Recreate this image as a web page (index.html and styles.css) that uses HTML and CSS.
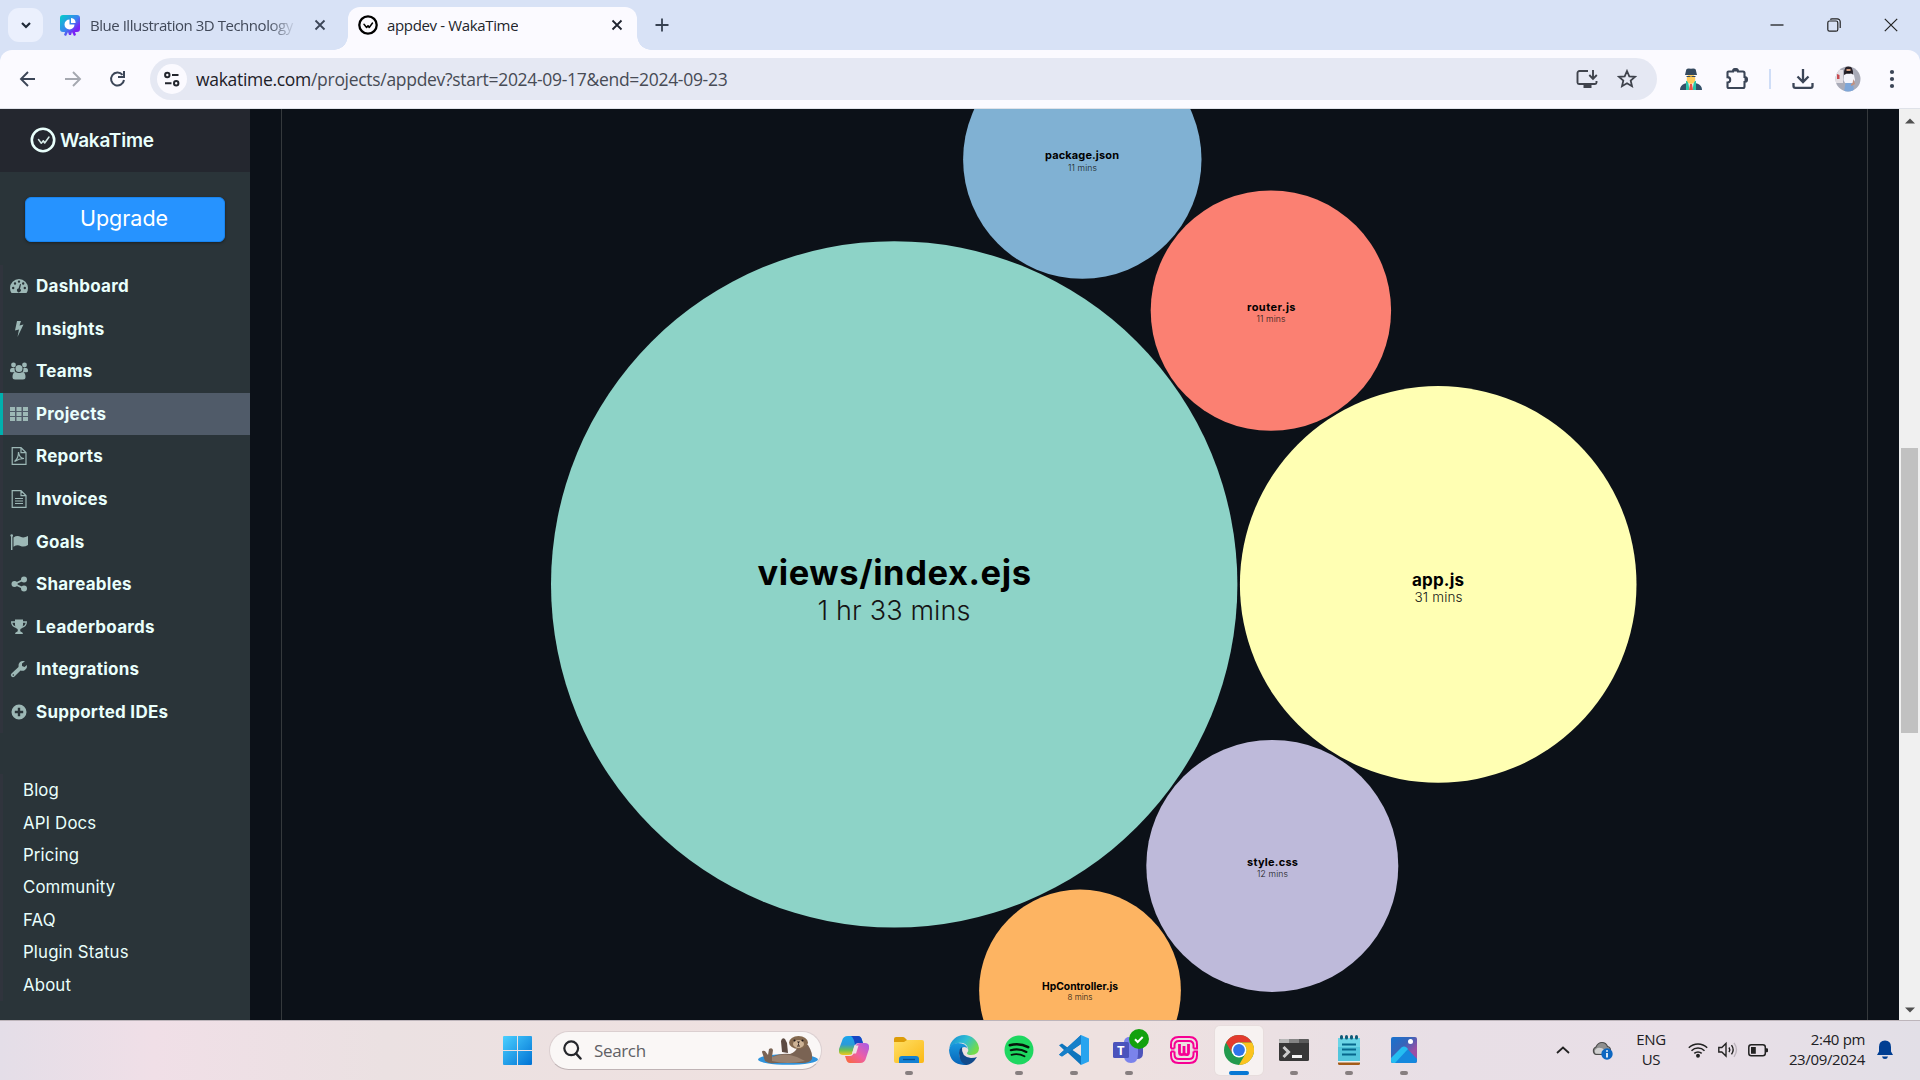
FILE: index.html
```html
<!DOCTYPE html>
<html lang="en">
<head>
<meta charset="utf-8">
<title>appdev - WakaTime</title>
<link rel="stylesheet" href="styles.css">
</head>
<body>
<div class="screen">
  <header class="tabstrip">
    <div class="tab-search"><svg width="12" height="12" viewBox="0 0 12 12"><path d="M2 4l4 4 4-4" fill="none" stroke="#1f2937" stroke-width="2.2"/></svg></div>
    <div class="tab tab-idle">
      <svg class="favicon" width="20" height="21" viewBox="0 0 20 21"><defs><linearGradient id="fv" x1="0" y1="0" x2="1" y2="1"><stop offset="0" stop-color="#00d0c8"/><stop offset=".5" stop-color="#3b82f0"/><stop offset=".75" stop-color="#7a22f5"/></linearGradient></defs><path d="M3 0h14a3 3 0 0 1 3 3v11a3 3 0 0 1-3 3h-2l1 3-2 1-2-4-1 3H9l-1-3-2 4-2-1 1-3H3a3 3 0 0 1-3-3V3a3 3 0 0 1 3-3z" fill="url(#fv)"/><path d="M9.500 4.500v5h5a5 5 0 1 1-5-5z" fill="#fff"/><path d="M11 3a5 5 0 0 1 4.600 5H11z" fill="#fff"/></svg>
      <span class="tab-title fade">Blue Illustration 3D Technology</span>
      <svg class="tab-close" width="12" height="12" viewBox="0 0 12 12"><path d="M1.500 1.500l9 9m0-9l-9 9" stroke="#3c4657" stroke-width="1.800"/></svg>
    </div>
    <div class="tab tab-active">
      <svg class="favicon" width="20" height="20" viewBox="0 0 20 20"><circle cx="10" cy="10" r="8.700" fill="none" stroke="#000" stroke-width="2.300"/><path d="M6 9.300l2.600 3.200 1.400-1.800 1.200 1.800L14.500 8" fill="none" stroke="#000" stroke-width="1.500" stroke-linejoin="round" stroke-linecap="round"/></svg>
      <span class="tab-title">appdev - WakaTime</span>
      <svg class="tab-close" width="12" height="12" viewBox="0 0 12 12"><path d="M1.500 1.500l9 9m0-9l-9 9" stroke="#1f2430" stroke-width="1.800"/></svg>
    </div>
    <svg class="new-tab" width="14" height="14" viewBox="0 0 14 14"><path d="M7 .5v13M.5 7h13" stroke="#374151" stroke-width="1.800"/></svg>
    <div class="window-controls">
      <svg width="14" height="14" viewBox="0 0 14 14"><path d="M.5 7h13" stroke="#111" stroke-width="1.200"/></svg>
      <svg width="14" height="14" viewBox="0 0 14 14" fill="none" stroke="#222" stroke-width="1.200"><rect x=".8" y="3" width="10" height="10.200" rx="1.800"/><path d="M3.300 1.500Q4 .8 5 .8h5.200a3 3 0 0 1 3 3V10"/></svg>
      <svg width="14" height="14" viewBox="0 0 14 14"><path d="M.8.800l12.400 12.400m0-12.400L.8 13.200" stroke="#222" stroke-width="1.200"/></svg>
    </div>
  </header>

  <div class="toolbar">
    <div class="nav-buttons">
      <svg width="18" height="18" viewBox="0 0 18 18" fill="none" stroke="#3b4557" stroke-width="1.900"><path d="M16 9H2.500M9 2L2 9l7 7"/></svg>
      <svg width="18" height="18" viewBox="0 0 18 18" fill="none" stroke="#a5a8b0" stroke-width="1.900"><path d="M1 9h14.500M9 2l7 7-7 7"/></svg>
      <svg width="18" height="18" viewBox="0 0 18 18" fill="none" stroke="#3b4557" stroke-width="2"><path d="M15 10A6.500 6.500 0 1 1 13.500 4.800"/><path d="M15 1v6H9"/></svg>
    </div>
    <div class="omnibox">
      <span class="site-info"><svg width="17" height="16" viewBox="0 0 17 16" fill="none" stroke="#23262e" stroke-width="2"><circle cx="3.300" cy="4" r="2.200"/><path d="M8 4h6.500M1 12.300h6.500"/><circle cx="12.200" cy="12.300" r="2.200"/></svg></span>
      <span class="url"><b>wakatime.com</b>/projects/appdev?start=2024-09-17&amp;end=2024-09-23</span>
      <svg width="22" height="20" viewBox="0 0 22 20" fill="none" stroke="#3f434c" stroke-width="1.900"><path d="M12 2H3.500A2 2 0 0 0 1.500 4v9.500A1.500 1.500 0 0 0 3 15h16a1.500 1.500 0 0 0 1.500-1.500V12"/><path d="M17 1v8M13.300 6l3.700 3.800L20.800 6"/><path d="M7.500 17.500h8" stroke-width="3"/></svg>
      <svg class="star" width="20" height="20" viewBox="0 0 20 20"><path d="M10 2l2.300 5.300 5.700.5-4.300 3.800 1.300 5.600-5-3-5 3 1.300-5.600L2 7.800l5.700-.5z" fill="none" stroke="#3f434c" stroke-width="1.800"/></svg>
    </div>
    <div class="extensions">
      <svg width="22" height="22" viewBox="0 0 22 22"><path d="M0 22q0-5 5-6.500l6-1.500 6 1.500q5 1.500 5 6.500z" fill="#33506a"/><path d="M6 13l5-1 5 1v9H6z" fill="#29c5a7"/><path d="M8 13h6l-1.500 9h-3z" fill="#f4f4ee"/><path d="M10 16h2l1 6H9z" fill="#ee5045"/><ellipse cx="11" cy="11" rx="4.300" ry="5" fill="#ffcc5c"/><path d="M5 7l1.300-5.500q1-1.500 4.700-.7 3.700-.8 4.700.7L17 7z" fill="#34495e"/><path d="M6.500 8h9v1h-3l-1.500-.8-1.500.8h-3z" fill="#34495e"/></svg>
      <svg width="22" height="22" viewBox="0 0 22 22"><path d="M2.500 3.500H7a2.500 2.500 0 0 1 5 0h5A1.500 1.500 0 0 1 18.500 5v4a2.500 2.500 0 0 1 0 5v4.500A1.500 1.500 0 0 1 17 20H2.500A1 1 0 0 1 1.500 19v-4.500a2.700 2.700 0 0 0 0-5.400V4.500a1 1 0 0 1 1-1z" fill="none" stroke="#3b4557" stroke-width="2.100"/><path d="M7 3.500a2.500 2.500 0 0 1 5 0M18.500 9a2.500 2.500 0 0 1 0 5" fill="#3b4557"/></svg>
      <i class="divider"></i>
      <svg width="22" height="22" viewBox="0 0 22 22" fill="none" stroke="#3b4557" stroke-width="2.300"><path d="M11 1v12M5.500 8.500L11 14l5.500-5.500M1.500 15v3a1.800 1.800 0 0 0 1.800 1.800h15.400a1.800 1.800 0 0 0 1.800-1.800v-3"/></svg>
      <svg class="avatar" width="26" height="26" viewBox="0 0 26 26"><defs><clipPath id="av"><circle cx="13" cy="13" r="12.500"/></clipPath></defs><g clip-path="url(#av)"><path d="M0 0h26v26H0z" fill="#a9abb8"/><path d="M0 4h8v13H0z" fill="#e3dfe5"/><path d="M2 8l2.500 1v4H2z" fill="#c84a50"/><path d="M9 8q0-8 4.500-8T18 8v4H9z" fill="#28222a"/><path d="M11.500 3h4v2h-4z" fill="#d6a083"/><path d="M9 9l3-1.500h4L19 9l1 5-2 3h-8l-1.500-3z" fill="#f4f4fb"/><path d="M10.500 17h7.500l1 9H9z" fill="#7ea6d8"/><path d="M18.500 13l1.500 5-3.500 2-.7-1.500 1.700-1.500z" fill="#c29180"/><path d="M11.500 5h4v2.500h-4z" fill="#18161c"/></g></svg>
      <svg width="6" height="20" viewBox="0 0 6 20" fill="#3b4557"><circle cx="3" cy="3" r="2.100"/><circle cx="3" cy="10" r="2.100"/><circle cx="3" cy="17" r="2.100"/></svg>
    </div>
  </div>

  <div class="page">
    <aside class="sidebar">
      <div class="brand">
        <svg width="26" height="26" viewBox="0 0 26 26"><circle cx="13" cy="13" r="11.200" fill="none" stroke="#e9fffc" stroke-width="2.600"/><path d="M8.500 12.500l2.800 3.700 2-2.500 1.400 2.300 4.300-6" fill="none" stroke="#d5e9e7" stroke-width="1.500" stroke-linejoin="round" stroke-linecap="round"/></svg>
        <span>WakaTime</span>
      </div>
      <a class="upgrade">Upgrade</a>
      <nav class="menu">
        <a><svg viewBox="0 0 18 18"><path fill-rule="evenodd" d="M0 11a9 9 0 0 1 18 0q0 3-1.500 5h-15Q0 14 0 11zm2 0a1.200 1.200 0 1 0 2.400 0A1.200 1.200 0 0 0 2 11zm1.800-4.500a1.200 1.200 0 1 0 2.400 0 1.200 1.200 0 0 0-2.400 0zM7.800 4.600a1.200 1.200 0 1 0 2.400 0 1.200 1.200 0 0 0-2.400 0zM12 6.500a1.200 1.200 0 1 0 2.400 0 1.200 1.200 0 0 0-2.400 0zM13.600 11a1.200 1.200 0 1 0 2.400 0 1.200 1.200 0 0 0-2.400 0zM10 7L8.500 11.500a1.900 1.900 0 1 0 1.500.3L11 7.300z"/></svg><span>Dashboard</span></a>
        <a><svg viewBox="0 0 18 18"><path d="M7 1h4L9.500 5.500l4-1L7.500 17 9 9.500l-4 1z"/></svg><span>Insights</span></a>
        <a><svg viewBox="0 0 18 18"><circle cx="3.500" cy="3" r="2.400"/><circle cx="14.500" cy="3" r="2.400"/><circle cx="9" cy="6.500" r="3.500"/><path d="M0 9q0-3 2-3h2.500q0 3 1.200 4.200H1.500Q0 10.200 0 9zM18 9q0-3-2-3h-2.500q0 3-1.200 4.200h4.200Q18 10.200 18 9zM2.500 15q0-4.500 3-5 3.500 2.200 7 0 3 .5 3 5 0 2.500-2.500 2.500H5Q2.500 17.500 2.500 15z"/></svg><span>Teams</span></a>
        <a class="current"><svg viewBox="0 0 18 18"><path d="M0 2h5v4H0zM6.500 2h5v4h-5zM13 2h5v4h-5zM0 7h5v4H0zM6.500 7h5v4h-5zM13 7h5v4h-5zM0 12h5v4H0zM6.500 12h5v4h-5zM13 12h5v4h-5z"/></svg><span>Projects</span></a>
        <a><svg viewBox="0 0 18 18" class="line"><path d="M2.200.7h8.800l5 4.800v11.800H2.200zM11 .7v5h5"/><path d="M4.500 14.500q4-3 4-9.500.5 6 5.500 6.500-5 0-9.500 3"/></svg><span>Reports</span></a>
        <a><svg viewBox="0 0 18 18" class="line"><path d="M2.200.7h8.800l5 4.800v11.800H2.200zM11 .7v5h5M5 8.500h8M5 11h8M5 13.500h8"/></svg><span>Invoices</span></a>
        <a><svg viewBox="0 0 18 18"><path d="M1 2h1.400v15H1z"/><circle cx="1.700" cy="2.500" r="1.300"/><path d="M3.500 4.500q3.500-2.500 7-.8Q13.500 5.500 18 3v9q-4 2.500-7.500 1-3-1.800-7 .7z"/></svg><span>Goals</span></a>
        <a><svg viewBox="0 0 18 18"><circle cx="4.500" cy="9" r="3"/><circle cx="14" cy="4.500" r="3"/><circle cx="14" cy="13.500" r="3"/><path d="M14 4.500L4.500 9l9.500 4.500" fill="none" stroke="#9db8b6" stroke-width="1.800"/></svg><span>Shareables</span></a>
        <a><svg viewBox="0 0 18 18"><path d="M5 1.500h8V7q0 3-2.500 4-.7 1 0 2.500Q13 14 13 16H5q0-2 2.500-2.500.7-1.500 0-2.500Q5 10 5 7z"/><path d="M5 4H1.700q0 4.500 5 5.300M13 4h3.300q0 4.500-5 5.300" fill="none" stroke="#9db8b6" stroke-width="1.300"/></svg><span>Leaderboards</span></a>
        <a><svg viewBox="0 0 18 18"><path fill-rule="evenodd" d="M1.500 13.500L8.500 7q-.7-3 1.500-5 2-1.500 5-.7L12 3.500V6l2.500 1L17 5q.5 3-2 5-2 1.300-4.500.6L4.500 16.500a2 2 0 0 1-3-3zM2.500 15a.8.800 0 1 0 1.600 0 .8.800 0 0 0-1.600 0z"/></svg><span>Integrations</span></a>
        <a><svg viewBox="0 0 18 18"><path fill-rule="evenodd" d="M9 1.500a7.500 7.500 0 1 1 0 15 7.500 7.500 0 0 1 0-15zM7.800 4.800v3H4.800v2.400h3v3h2.400v-3h3V7.800h-3v-3z"/></svg><span>Supported IDEs</span></a>
      </nav>
      <nav class="links">
        <a>Blog</a><a>API Docs</a><a>Pricing</a><a>Community</a><a>FAQ</a><a>Plugin Status</a><a>About</a>
      </nav>
    </aside>
    <main class="stage">
      <svg class="bubbles" width="1585" height="911" viewBox="282 109 1585 911">
        <circle cx="894.200" cy="584.400" r="343.200" fill="#8dd3c7"/>
        <circle cx="1438.200" cy="584.400" r="198.300" fill="#ffffb3"/>
        <circle cx="1272.300" cy="865.900" r="126" fill="#bebada"/>
        <circle cx="1270.900" cy="310.600" r="120.200" fill="#fb8072"/>
        <circle cx="1082.300" cy="159.500" r="119.200" fill="#80b1d3"/>
        <circle cx="1080" cy="990.500" r="100.900" fill="#fdb462"/>
        <g class="name">
          <text x="757.500" y="584.500" font-size="34.500" textLength="273.500">views/index.ejs</text>
          <text x="1412" y="585.500" font-size="17" textLength="52">app.js</text>
          <text x="1247" y="866" font-size="11" textLength="51">style.css</text>
          <text x="1247" y="311" font-size="11" textLength="48.500">router.js</text>
          <text x="1045" y="159" font-size="11" textLength="74">package.json</text>
          <text x="1042" y="990" font-size="10.300" textLength="76">HpController.js</text>
        </g>
        <g class="time">
          <text x="817.500" y="620" font-size="27" textLength="153">1 hr 33 mins</text>
          <text x="1414.500" y="602" font-size="13.500" textLength="48">31 mins</text>
          <text x="1257" y="877" font-size="8.600" textLength="31">12 mins</text>
          <text x="1256.500" y="322" font-size="8.600" textLength="29">11 mins</text>
          <text x="1068" y="171.300" font-size="8.600" textLength="29">11 mins</text>
          <text x="1067.500" y="1000.300" font-size="8" textLength="25">8 mins</text>
        </g>
      </svg>
    </main>
    <div class="scrollbar">
      <svg width="10" height="6" viewBox="0 0 10 6"><path d="M0 5.500L5 .5l5 5z" fill="#505050"/></svg>
      <i class="thumb"></i>
      <svg width="10" height="6" viewBox="0 0 10 6"><path d="M0 .5l5 5 5-5z" fill="#505050"/></svg>
    </div>
  </div>

  <footer class="taskbar">
    <svg class="start" width="29" height="29" viewBox="0 0 29 29"><defs><linearGradient id="win" x1="0" y1="0" x2="1" y2="1"><stop offset="0" stop-color="#4bd0ff"/><stop offset="1" stop-color="#0072d4"/></linearGradient></defs><path d="M1 0h13v14H0V1q0-1 1-1zM15 0h13q1 0 1 1v13H15zM0 15h14v14H1q-1 0-1-1zM15 15h14v13q0 1-1 1H15z" fill="url(#win)"/></svg>
    <div class="search">
      <svg width="20" height="20" viewBox="0 0 20 20" fill="none" stroke="#25262b" stroke-width="2.200"><circle cx="8.200" cy="8.300" r="6.900"/><path d="M13 13.500l4.500 5" stroke-linecap="round" stroke-width="2.500"/></svg>
      <span>Search</span>
      <svg class="otter" width="61" height="30" viewBox="0 0 61 30"><ellipse cx="31" cy="24.500" rx="30" ry="5.300" fill="#2f93dc"/><path d="M8 26L5 17q0-2 3-1l3 4 1-6q3-2 4 1l-1 7q8-4 18-3 6-2 9-9h9q5 8 4 14-2 4-10 4H18q-6 1-10-2z" fill="#7a6353"/><path d="M15 22q13-5 25 0l8 4q-18 4-33 0z" fill="#9a8270"/><path d="M25 17l-1-11q1-4 4-2l2 4 1 10z" fill="#5c4a42"/><ellipse cx="41.500" cy="7.500" rx="9.500" ry="6.500" fill="#84694f"/><ellipse cx="41.500" cy="9" rx="5.500" ry="4" fill="#cdb396"/><path d="M40 6.500h3l-1.500 2z" fill="#2a2020"/><circle cx="37.500" cy="5.500" r="1" fill="#20191a"/><circle cx="45.500" cy="5.500" r="1" fill="#20191a"/><path d="M41.500 8.500v2m-1.500.5h3" stroke="#3a2c28"/></svg>
    </div>
    <div class="apps">
      <div class="app"><svg width="30" height="30" viewBox="0 0 30 30"><defs><linearGradient id="c1" x1="0" y1="0" x2="0" y2="1"><stop offset="0" stop-color="#1ba6ee"/><stop offset=".45" stop-color="#2b9ad8"/><stop offset=".75" stop-color="#6fc04f"/><stop offset="1" stop-color="#f2c71e"/></linearGradient><linearGradient id="c2" x1="1" y1="0" x2="0" y2="1"><stop offset="0" stop-color="#a45bea"/><stop offset=".5" stop-color="#ee5fa5"/><stop offset="1" stop-color="#fb6a30"/></linearGradient></defs><path d="M14 1h5q3 0 4 4l1 3h-5q-3 0-4 4l-2 7q-1 1-4 1H4q-5 0-4-6L3 6q1-5 6-5z" fill="url(#c1)"/><path d="M16 28h-5q-3 0-4-4l-1-3h5q3 0 4-4l2-7q1-2 4-2h5q5 0 4 6l-3 9q-1 5-6 5z" fill="url(#c2)"/><path d="M15 1h4q3 0 4 4l1 3h-5q-2 0-3 2-1-7-4-9z" fill="#1746c4"/><path d="M15.500 10.500h4l-2.500 8h-4z" fill="#efe2e2"/></svg></div>
      <div class="app run"><svg width="30" height="30" viewBox="0 0 30 30"><defs><linearGradient id="fo" x1="0" y1="0" x2="1" y2="1"><stop offset="0" stop-color="#ffdf65"/><stop offset="1" stop-color="#fbb814"/></linearGradient></defs><path d="M0 4q0-2 2-2h7q1 0 2 1l2 2v5H0z" fill="#dd9c08"/><path d="M0 7h10l3-2h15q2 0 2 2v19q0 2-2 2H2q-2 0-2-2z" fill="url(#fo)"/><path d="M5 28v-4q0-3 3-3h14q3 0 3 3v4z" fill="#1381d3"/><path d="M9 24.500h12" stroke="#084f92" stroke-width="1.300"/></svg></div>
      <div class="app"><svg width="30" height="30" viewBox="0 0 30 30"><defs><linearGradient id="e1" x1="0" y1="0" x2="1" y2=".5"><stop offset="0" stop-color="#1487d4"/><stop offset=".55" stop-color="#31bfd3"/><stop offset="1" stop-color="#73db4b"/></linearGradient><linearGradient id="e2" x1="0" y1="0" x2="0" y2="1"><stop offset="0" stop-color="#1999df"/><stop offset="1" stop-color="#0763b7"/></linearGradient></defs><path d="M.3 13A15 15 0 0 1 30 13q0 7-8 7-4 0-4-2 2-2 1-5Q17 7 9 8 3 9 .3 13z" fill="url(#e1)"/><path d="M0 15Q1 8 9 8q8 0 10 6-1-2-4-2-4 1-5 6 0 8 9 12Q1 31 0 15z" fill="url(#e2)"/><path d="M10 18q0-4 3-6-1 10 9 11 4 0 6-1-5 8-11 8-7-3-7-12z" fill="#114a8b"/></svg></div>
      <div class="app run"><svg width="30" height="30" viewBox="0 0 30 30"><circle cx="15" cy="15" r="14.500" fill="#1ed760"/><path d="M5.800 10.200q10-2.700 18.400 2" fill="none" stroke="#06140b" stroke-linecap="round" stroke-width="2.600"/><path d="M6.800 15.200q8.500-2.300 15.600 1.800" fill="none" stroke="#06140b" stroke-linecap="round" stroke-width="2.100"/><path d="M7.500 19.800q7-1.800 13 1.500" fill="none" stroke="#06140b" stroke-linecap="round" stroke-width="1.800"/></svg></div>
      <div class="app run"><svg width="30" height="30" viewBox="0 0 30 30"><path d="M22 0L8.500 12.500 3 8.500 0 10.200l5 4.800-5 4.800 3 1.700 5.500-4L22 30V21l-8.500-6L22 9z" fill="#0e75bd"/><path d="M0 19.800L22 0v9L3 21.500z" fill="#167fc9"/><path d="M22 0l8 3.500v23L22 30z" fill="#28a4ef"/></svg></div>
      <div class="app run"><svg class="teams" width="36" height="35" viewBox="0 0 36 35"><circle cx="16" cy="13" r="5" fill="#7b83eb"/><path d="M20 15h10v9q0 6-6 6h-4z" fill="#4f55bb"/><path d="M11 15h14v10q0 9-7 9t-7-8z" fill="#7b83eb"/><rect y="13" width="16" height="16" rx="1.500" fill="#4b53bc"/><text x="4" y="25.500" class="teams-letter">T</text><circle cx="26" cy="10" r="10" fill="#13a10e"/><path d="M22 10.300l2.700 2.700 5-5" fill="none" stroke="#fff" stroke-width="2"/></svg></div>
      <div class="app"><svg width="30" height="30" viewBox="0 0 30 30"><g fill="none" stroke="#f70094" stroke-width="2"><path d="M2 13.500V9.500Q2 2 9.500 2h11Q28 2 28 9.500v4h-3.500M2 16.500v4Q2 28 9.500 28h11q7.500 0 7.500-7.500v-4h-3.500M2 13.500h3.500M2 16.500h3.500" /><path d="M5.500 13.500v-3q0-4.500 4.500-4.500h10q4.500 0 4.500 4.500v3M5.500 16.500v3q0 4.500 4.500 4.500h10q4.500 0 4.500-4.500v-3"/><path d="M10.500 9v8.500q0 2.200 2.200 2.200T15 17.500V11v6.500q0 2.200 2.300 2.200t2.200-2.200V9" stroke-width="2.800"/></g></svg></div>
      <div class="app run active"><svg width="30" height="30" viewBox="0 0 30 30"><circle cx="15" cy="15" r="15" fill="#229a4d"/><path d="M2 7.500A15 15 0 0 1 28 7.500H15A7.500 7.500 0 0 0 8.500 18.700z" fill="#e33b2e"/><path d="M28 7.500A15 15 0 0 1 15 30l6.500-11.300A7.500 7.500 0 0 0 15 7.500z" fill="#fcc31e"/><circle cx="15" cy="15" r="7.500" fill="#fff"/><circle cx="15" cy="15" r="5.900" fill="#2f74ea"/></svg></div>
      <div class="app run"><svg width="30" height="30" viewBox="0 0 30 30"><rect y="4" width="30" height="22" rx="1.500" fill="#383838"/><path d="M0 8V5.500Q0 4 1.500 4H10v4z" fill="#b7b7b7"/><path d="M10 4h10v4H10z" fill="#858585"/><path d="M20 4h8.500Q30 4 30 5.500V8H20z" fill="#5b5b5b"/><path d="M4.500 12l5 5-5 5" fill="none" stroke="#ccc" stroke-width="3"/><path d="M13 20h10v3H13z" fill="#f4f4f4"/></svg></div>
      <div class="app run"><svg width="24" height="30" viewBox="0 0 24 30"><path d="M1 3h22v23H1z" fill="#52c5dc"/><path d="M1 3h22v9H1z" fill="#6bd5e7"/><path d="M1 27h22v1.500q0 1.500-1.500 1.500h-19Q1 30 1 28.500z" fill="#a35a17"/><path d="M1 26h22v1.500H1z" fill="#eee"/><path d="M5 9.500h14M5 14.500h14M5 19.500h14" stroke="#07678c" stroke-width="1.800"/><g fill="#105b78"><rect x="3" width="3" height="4.500" rx="1.500"/><rect x="8" width="3" height="4.500" rx="1.500"/><rect x="13" width="3" height="4.500" rx="1.500"/><rect x="18" width="3" height="4.500" rx="1.500"/></g></svg></div>
      <div class="app run"><svg width="26" height="26" viewBox="0 0 26 26"><defs><linearGradient id="ph" x1="0" y1="0" x2="1" y2="1"><stop offset="0" stop-color="#1673cf"/><stop offset=".4" stop-color="#3764b9"/><stop offset=".7" stop-color="#9b4fa5"/></linearGradient><clipPath id="pc"><rect width="26" height="26" rx="2"/></clipPath></defs><rect width="26" height="26" rx="2" fill="url(#ph)"/><g clip-path="url(#pc)"><path d="M0 22l10.500-11q2.500-2.500 5 0L28 24v4H0z" fill="#1588dd"/><path d="M0 21l10.500-10.500q2.500-2 5 0L17 12 4 26H0z" fill="#25bdf1"/></g><circle cx="19.500" cy="4.500" r="2.500" fill="#fff"/></svg></div>
    </div>
    <div class="tray">
      <svg class="chev" width="14" height="8" viewBox="0 0 14 8"><path d="M1 7l6-5.500L13 7" fill="none" stroke="#222" stroke-width="1.800"/></svg>
      <svg class="cloud" width="21" height="19" viewBox="0 0 21 19"><path d="M4 13.500a4 4 0 0 1 0-7.500Q6 1.500 10 1.500t5.500 4q3 .5 3 4v4z" fill="#8f8f8f" stroke="#4c4c4c" stroke-width="1.200"/><path d="M3.500 12.500q-2-4 2-5.500 4-1 7 2l-1 4z" fill="#d0d0d0"/><circle cx="15" cy="13" r="5.700" fill="#0d67c1"/><path d="M15 9.200v1.600M15 12v4.500" stroke="#fff" stroke-width="1.700"/></svg>
      <div class="lang"><span>ENG</span><span>US</span></div>
      <svg class="wifi" width="20" height="16" viewBox="0 0 20 16" fill="none" stroke="#222" stroke-width="1.500"><path d="M.8 5.800a13 13 0 0 1 18.400 0M3.500 8.700a9.200 9.200 0 0 1 13 0M6.300 11.400a5.300 5.300 0 0 1 7.400 0"/><circle cx="10" cy="13.800" r="1.200" fill="#222"/></svg>
      <svg class="vol" width="20" height="18" viewBox="0 0 20 18" fill="none" stroke="#222" stroke-width="1.400"><path d="M.8 6.500V11h3L8 15V2.500L3.800 6.500z"/><path d="M11 6.500q1.500 2.300 0 4.600M13.500 4.200q3.300 4.600 0 9.200"/><path d="M16 1.800q5 7 0 14" stroke="#bdb5bd"/></svg>
      <svg class="batt" width="21" height="13" viewBox="0 0 21 13"><rect x=".8" y=".8" width="16.500" height="11" rx="2.500" fill="none" stroke="#222" stroke-width="1.500"/><path d="M3 3h4.800v6.700H3zM18 4.300h1q1 0 1 1v2q0 1-1 1h-1z" fill="#222"/></svg>
      <div class="clock"><span>2:40 pm</span><span>23/09/2024</span></div>
      <svg class="bell" width="16" height="20" viewBox="0 0 16 20"><path d="M8 .5q6 0 6 6.500v4.500l2 3.500H0l2-3.500V7Q2 .5 8 .5zM5 16.500h6q-.5 2.500-3 2.500t-3-2.500z" fill="#003e92"/></svg>
    </div>
  </footer>
</div>
</body>
</html>
```
FILE: styles.css
```css
* { box-sizing: border-box; }
body { margin: 0; overflow: hidden; font-family: "Open Sans", "Noto Sans", sans-serif; }
svg { display: block; flex: none; }
.screen { width: 1920px; height: 1080px; display: flex; flex-direction: column; background: #d8e2f6; }

/* Browser tabs */
.tabstrip { height: 50px; flex: none; display: flex; align-items: center; padding-left: 8px; }
.tab-search { width: 35px; height: 34px; border-radius: 11px; background: #ebf0fd; display: grid; place-items: center; }
.tab { display: flex; align-items: center; font-size: 15px; }
.tab-idle { width: 305px; padding: 0 22px 0 17px; color: #414959; }
.tab-active { width: 289px; height: 43px; align-self: flex-end; padding: 0 14px 7px 10px; background: #fbfaff; border-radius: 12px 12px 0 0; color: #22252c; position: relative; }
.tab-active::before, .tab-active::after { content: ""; position: absolute; bottom: 0; width: 14px; height: 14px; }
.tab-active::before { left: -14px; background: radial-gradient(circle at 0 0, transparent 13.5px, #fbfaff 14px); }
.tab-active::after { right: -14px; background: radial-gradient(circle at 100% 0, transparent 13.5px, #fbfaff 14px); }
.tab-title { margin-left: 9px; white-space: nowrap; letter-spacing: -0.35px; overflow: hidden; }
.fade { width: 207px; margin-left: 10px; letter-spacing: -0.47px; -webkit-mask-image: linear-gradient(90deg, #000 86%, transparent); mask-image: linear-gradient(90deg, #000 86%, transparent); }
.tab-close { margin-left: auto; }
.new-tab { margin-left: 18px; }
.window-controls { margin-left: auto; margin-right: 22px; display: flex; gap: 43px; }

/* Address bar */
.toolbar { height: 59px; flex: none; display: flex; align-items: center; background: #fbfaff; border-bottom: 1px solid #dfe2e9; border-radius: 12px 12px 0 0; }
.nav-buttons { width: 150px; padding-left: 19px; display: flex; gap: 27px; }
.omnibox { width: 1507px; height: 42px; border-radius: 21px; background: #e5e8f3; display: flex; align-items: center; padding: 0 20px 0 7px; }
.site-info { width: 30px; height: 30px; border-radius: 50%; background: #fbfaff; display: grid; place-items: center; }
.url { flex: 1; margin-left: 9px; font-size: 17.5px; letter-spacing: -0.3px; color: #474b55; white-space: nowrap; }
.url b { font-weight: 400; color: #1d2027; }
.star { margin-left: 19px; }
.extensions { display: flex; align-items: center; margin-left: 23px; }
.extensions svg + svg { margin-left: 24px; }
.divider { width: 2px; height: 20px; margin: 0 21px; background: #cfddf7; }
.extensions .divider + svg { margin-left: 0; }
.extensions svg.avatar { margin-left: 21px; }
.extensions svg:last-child { margin-left: 28px; }

/* WakaTime page */
.page { height: 911px; flex: none; display: flex; background: #0c1118; }
.sidebar { width: 250px; background: #2a3439; color: #e9fffc; font-family: Inter, Roboto, sans-serif; }
.brand { height: 63px; background: #24272f; display: flex; align-items: center; padding: 0 0 1px 30px; gap: 4px; font-size: 19px; font-weight: 600; letter-spacing: -0.2px; }
.upgrade { display: grid; place-items: center; width: 200px; height: 45px; margin: 25px 25px 23px; border: 1px solid #1784f0; border-radius: 6px; background: #2693ff; color: #fff; font-size: 21.5px; padding: 0 2px 4px 0; box-shadow: 0 1px 3px rgba(0,0,0,.4); }
.menu, .links { display: flex; flex-direction: column; border-left: 3px solid #30343d; }
.menu { height: 468px; }
.menu a { flex: 1; display: flex; align-items: center; padding-left: 7px; gap: 8px; font-size: 17px; font-weight: 650; letter-spacing: 0.26px; }
.menu .current { background: #505b69; margin-left: -3px; border-left: 3px solid #00b0ae; }
.menu svg { width: 18px; height: 18px; fill: #9db8b6; }
.menu svg.line { fill: none; stroke: #9db8b6; stroke-width: 1.2; }
.links { height: 227px; margin-top: 41px; }
.links a { flex: 1; display: flex; align-items: center; padding-left: 20px; font-size: 16.8px; letter-spacing: 0.15px; }
.stage { width: 1587px; margin-left: 31px; border: solid #35393c; border-width: 0 1px; }
.bubbles text { font-family: Inter, Roboto, sans-serif; }
.bubbles .name { font-weight: 650; fill: #000; }
.bubbles .time { font-weight: 300; fill: #151515; }
.scrollbar { width: 21px; margin-left: auto; background: #f0f0f0; display: flex; flex-direction: column; align-items: center; padding: 9px 0 7px; }
.thumb { width: 17px; height: 285px; margin-top: 324px; background: #c1c1c1; }
.scrollbar svg:last-child { margin-top: auto; }

/* Windows taskbar */
.taskbar { flex: 1; display: flex; align-items: center; padding-bottom: 1px; border-top: 1px solid #bdb5bb; background: linear-gradient(90deg, #e4dee8 0, #f0dfe7 8%, #ebe1e2 20%, #efe1e0 40%, #eee1e0 58%, #e8dfe6 75%, #e9dfe7 88%, #e2dfe7 100%); }
.start { margin-left: 503px; }
.search { width: 273px; height: 39px; margin-left: 17px; border: 1px solid #dbcfd0; border-bottom-color: #bfb3b5; border-radius: 20px; background: #faf7f6; display: flex; align-items: center; padding: 0 3px 0 13px; font-size: 17px; color: #606064; }
.search span { margin-left: 11px; letter-spacing: -0.35px; }
.otter { margin-left: auto; }
.apps { display: flex; gap: 7px; margin-left: 8px; }
.app { width: 48px; height: 49px; border-radius: 5px; display: grid; place-items: center; position: relative; }
.run::after { content: ""; position: absolute; bottom: 0; left: 20px; width: 8px; height: 4px; border-radius: 2px; background: #877f80; }
.active { background: #f7f2f1; box-shadow: 0 0 0 1px #e7dddd; }
.active::after { left: 14px; width: 20px; background: #0878d4; }
.teams { margin: -8px 0 0 3px; }
.teams-letter { font: 700 13px "Open Sans", sans-serif; fill: #fff; }
.tray { margin-left: auto; display: flex; align-items: center; font-size: 15px; color: #202024; }
.cloud { margin-left: 22px; }
.lang, .clock { display: flex; flex-direction: column; line-height: 20px; letter-spacing: -0.35px; padding-bottom: 2px; }
.lang { width: 34px; margin-left: 21px; align-items: center; }
.wifi { margin-left: 20px; }
.vol { margin-left: 10px; }
.batt { margin-left: 10px; }
.clock { width: 84px; margin-left: 12px; align-items: flex-end; }
.bell { margin: 0 27px 0 12px; }
```
